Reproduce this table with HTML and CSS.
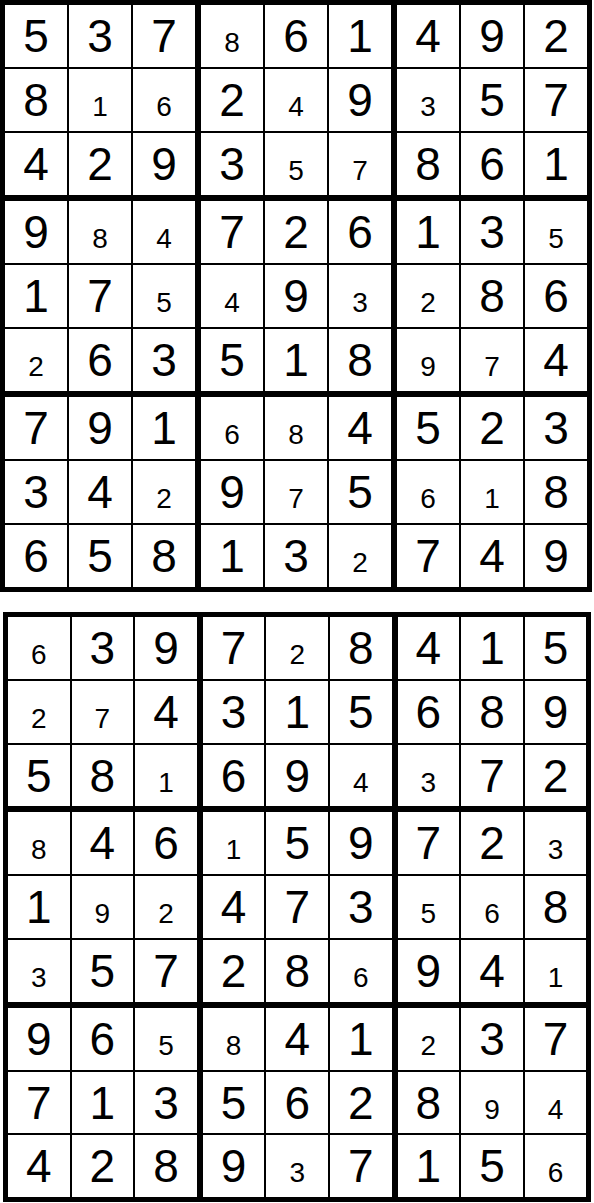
FILE: index.html
```html
<!DOCTYPE html>
<html>
<head>
<meta charset="utf-8">
<link rel="stylesheet" href="styles.css">
</head>
<body>
<div class="page">
  <div class="board board-top">
    <div class="cell">5</div><div class="cell">3</div><div class="cell">7</div><div class="cell"><span class="s">8</span></div><div class="cell">6</div><div class="cell">1</div><div class="cell">4</div><div class="cell">9</div><div class="cell">2</div>
    <div class="cell">8</div><div class="cell"><span class="s">1</span></div><div class="cell"><span class="s">6</span></div><div class="cell">2</div><div class="cell"><span class="s">4</span></div><div class="cell">9</div><div class="cell"><span class="s">3</span></div><div class="cell">5</div><div class="cell">7</div>
    <div class="cell">4</div><div class="cell">2</div><div class="cell">9</div><div class="cell">3</div><div class="cell"><span class="s">5</span></div><div class="cell"><span class="s">7</span></div><div class="cell">8</div><div class="cell">6</div><div class="cell">1</div>
    <div class="cell">9</div><div class="cell"><span class="s">8</span></div><div class="cell"><span class="s">4</span></div><div class="cell">7</div><div class="cell">2</div><div class="cell">6</div><div class="cell">1</div><div class="cell">3</div><div class="cell"><span class="s">5</span></div>
    <div class="cell">1</div><div class="cell">7</div><div class="cell"><span class="s">5</span></div><div class="cell"><span class="s">4</span></div><div class="cell">9</div><div class="cell"><span class="s">3</span></div><div class="cell"><span class="s">2</span></div><div class="cell">8</div><div class="cell">6</div>
    <div class="cell"><span class="s">2</span></div><div class="cell">6</div><div class="cell">3</div><div class="cell">5</div><div class="cell">1</div><div class="cell">8</div><div class="cell"><span class="s">9</span></div><div class="cell"><span class="s">7</span></div><div class="cell">4</div>
    <div class="cell">7</div><div class="cell">9</div><div class="cell">1</div><div class="cell"><span class="s">6</span></div><div class="cell"><span class="s">8</span></div><div class="cell">4</div><div class="cell">5</div><div class="cell">2</div><div class="cell">3</div>
    <div class="cell">3</div><div class="cell">4</div><div class="cell"><span class="s">2</span></div><div class="cell">9</div><div class="cell"><span class="s">7</span></div><div class="cell">5</div><div class="cell"><span class="s">6</span></div><div class="cell"><span class="s">1</span></div><div class="cell">8</div>
    <div class="cell">6</div><div class="cell">5</div><div class="cell">8</div><div class="cell">1</div><div class="cell">3</div><div class="cell"><span class="s">2</span></div><div class="cell">7</div><div class="cell">4</div><div class="cell">9</div>
  </div>
  <div class="board board-bottom">
    <div class="cell"><span class="s">6</span></div><div class="cell">3</div><div class="cell">9</div><div class="cell">7</div><div class="cell"><span class="s">2</span></div><div class="cell">8</div><div class="cell">4</div><div class="cell">1</div><div class="cell">5</div>
    <div class="cell"><span class="s">2</span></div><div class="cell"><span class="s">7</span></div><div class="cell">4</div><div class="cell">3</div><div class="cell">1</div><div class="cell">5</div><div class="cell">6</div><div class="cell">8</div><div class="cell">9</div>
    <div class="cell">5</div><div class="cell">8</div><div class="cell"><span class="s">1</span></div><div class="cell">6</div><div class="cell">9</div><div class="cell"><span class="s">4</span></div><div class="cell"><span class="s">3</span></div><div class="cell">7</div><div class="cell">2</div>
    <div class="cell"><span class="s">8</span></div><div class="cell">4</div><div class="cell">6</div><div class="cell"><span class="s">1</span></div><div class="cell">5</div><div class="cell">9</div><div class="cell">7</div><div class="cell">2</div><div class="cell"><span class="s">3</span></div>
    <div class="cell">1</div><div class="cell"><span class="s">9</span></div><div class="cell"><span class="s">2</span></div><div class="cell">4</div><div class="cell">7</div><div class="cell">3</div><div class="cell"><span class="s">5</span></div><div class="cell"><span class="s">6</span></div><div class="cell">8</div>
    <div class="cell"><span class="s">3</span></div><div class="cell">5</div><div class="cell">7</div><div class="cell">2</div><div class="cell">8</div><div class="cell"><span class="s">6</span></div><div class="cell">9</div><div class="cell">4</div><div class="cell"><span class="s">1</span></div>
    <div class="cell">9</div><div class="cell">6</div><div class="cell"><span class="s">5</span></div><div class="cell"><span class="s">8</span></div><div class="cell">4</div><div class="cell">1</div><div class="cell"><span class="s">2</span></div><div class="cell">3</div><div class="cell">7</div>
    <div class="cell">7</div><div class="cell">1</div><div class="cell">3</div><div class="cell">5</div><div class="cell">6</div><div class="cell">2</div><div class="cell">8</div><div class="cell"><span class="s">9</span></div><div class="cell"><span class="s">4</span></div>
    <div class="cell">4</div><div class="cell">2</div><div class="cell">8</div><div class="cell">9</div><div class="cell"><span class="s">3</span></div><div class="cell">7</div><div class="cell">1</div><div class="cell">5</div><div class="cell"><span class="s">6</span></div>
  </div>
</div>
</body>
</html>
```

FILE: styles.css
```css
html, body {
  margin: 0;
  padding: 0;
  background: #ffffff;
}

.page {
  display: flex;
  flex-direction: column;
  align-items: flex-start;
  gap: 20px;
  font-family: "Liberation Sans", Arial, sans-serif;
  color: #000;
}

.board {
  display: grid;
  grid-template-columns: repeat(9, auto);
  border: 5px solid #000;
  background: #fff;
}

.board-top {
  margin-left: 0;
}

.board-bottom {
  margin-left: 3px;
}

.cell {
  width: 62px;
  height: 62px;
  line-height: 62px;
  font-size: 46px;
  text-align: center;
  border-right: 2px solid #000;
  border-bottom: 2px solid #000;
  overflow: hidden;
}

.board-bottom .cell {
  width: 61.6px;
  height: 61.8px;
}

.cell:nth-child(9n+3),
.cell:nth-child(9n+6) {
  border-right-width: 6px;
}

.cell:nth-child(9n) {
  border-right: 0;
}

.cell:nth-child(n+19):nth-child(-n+27),
.cell:nth-child(n+46):nth-child(-n+54) {
  border-bottom-width: 6px;
}

.cell:nth-child(n+73) {
  border-bottom: 0;
}

.s {
  font-size: 28px;
  line-height: 1;
}
```
